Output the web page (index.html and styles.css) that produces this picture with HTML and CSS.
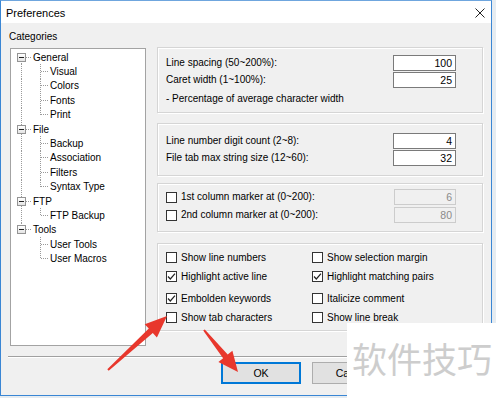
FILE: index.html
```html
<!DOCTYPE html>
<html>
<head>
<meta charset="utf-8">
<link rel="stylesheet" href="styles.css">
</head>
<body>
<div class="screen">
  <div class="window">
    <div class="titlebar">
      <span class="title">Preferences</span>
      <svg class="close" width="10" height="10" viewBox="0 0 10 10"><path d="M0.5 0.5 L9.5 9.5 M9.5 0.5 L0.5 9.5" stroke="#222" stroke-width="1" fill="none"/></svg>
    </div>
    <div class="client">
      <div class="main">
        <div class="left">
          <div class="cat-label">Categories</div>
          <div class="tree">
            <div class="row top first"><span class="box"></span><span class="hd hd5"></span><span class="tx">General</span></div>
            <div class="row child r"><span class="hd hd8"></span><span class="tx">Visual</span></div>
            <div class="row child r"><span class="hd hd8"></span><span class="tx">Colors</span></div>
            <div class="row child r"><span class="hd hd8"></span><span class="tx">Fonts</span></div>
            <div class="row child r last"><span class="hd hd8"></span><span class="tx">Print</span></div>
            <div class="row top mid"><span class="box"></span><span class="hd hd5"></span><span class="tx">File</span></div>
            <div class="row child r"><span class="hd hd8"></span><span class="tx">Backup</span></div>
            <div class="row child r"><span class="hd hd8"></span><span class="tx">Association</span></div>
            <div class="row child r"><span class="hd hd8"></span><span class="tx">Filters</span></div>
            <div class="row child r last"><span class="hd hd8"></span><span class="tx">Syntax Type</span></div>
            <div class="row top mid"><span class="box"></span><span class="hd hd5"></span><span class="tx">FTP</span></div>
            <div class="row child r last"><span class="hd hd8"></span><span class="tx">FTP Backup</span></div>
            <div class="row top last"><span class="box"></span><span class="hd hd5"></span><span class="tx">Tools</span></div>
            <div class="row child"><span class="hd hd8"></span><span class="tx">User Tools</span></div>
            <div class="row child last"><span class="hd hd8"></span><span class="tx">User Macros</span></div>
          </div>
        </div>
        <div class="right">
          <div class="group g1">
            <div class="frow"><span>Line spacing (50~200%):</span><span class="input">100</span></div>
            <div class="frow"><span>Caret width (1~100%):</span><span class="input">25</span></div>
            <div class="note">- Percentage of average character width</div>
          </div>
          <div class="group g2">
            <div class="frow"><span>Line number digit count (2~8):</span><span class="input">4</span></div>
            <div class="frow"><span>File tab max string size (12~60):</span><span class="input">32</span></div>
          </div>
          <div class="group g3">
            <div class="frow r18"><span class="chk"><span class="cb"></span>1st column marker at (0~200):</span><span class="input dis">6</span></div>
            <div class="frow r18"><span class="chk"><span class="cb"></span>2nd column marker at (0~200):</span><span class="input dis">80</span></div>
          </div>
          <div class="group g4">
            <div class="cgrid">
              <span class="chk"><span class="cb"></span>Show line numbers</span>
              <span class="chk"><span class="cb"></span>Show selection margin</span>
              <span class="chk"><span class="cb on"><svg width="11" height="11" viewBox="0 0 11 11"><path d="M2 5.5 L4.3 8 L9 2.6" stroke="#222" stroke-width="1.2" fill="none"/></svg></span>Highlight active line</span>
              <span class="chk"><span class="cb on"><svg width="11" height="11" viewBox="0 0 11 11"><path d="M2 5.5 L4.3 8 L9 2.6" stroke="#222" stroke-width="1.2" fill="none"/></svg></span>Highlight matching pairs</span>
            </div>
            <div class="cgrid second">
              <span class="chk"><span class="cb on"><svg width="11" height="11" viewBox="0 0 11 11"><path d="M2 5.5 L4.3 8 L9 2.6" stroke="#222" stroke-width="1.2" fill="none"/></svg></span>Embolden keywords</span>
              <span class="chk"><span class="cb"></span>Italicize comment</span>
              <span class="chk"><span class="cb"></span>Show tab characters</span>
              <span class="chk"><span class="cb"></span>Show line break</span>
            </div>
          </div>
        </div>
      </div>
      <div class="sep"></div>
      <div class="buttons">
        <div class="btn default">OK</div>
        <div class="btn">Cancel</div>
      </div>
    </div>
  </div>

  <svg class="arrows" width="496" height="398" viewBox="0 0 496 398">
    <polygon fill="#e8372c" points="107.3,369.3 148.8,328.6 144.7,324.2 167,316 156.9,337.5 152.8,333.1 108.7,370.7"/>
    <polygon fill="#e8372c" points="204.8,329.4 227.7,354.5 232.4,350.7 238,372 218.4,362.1 223.1,358.3 203.2,330.6"/>
  </svg>

  <div class="watermark">软件技巧</div>
</div>
</body>
</html>
```

FILE: styles.css
```css
* { box-sizing: border-box; }

body {
  margin: 0;
  width: 496px;
  height: 398px;
  overflow: hidden;
  background: #e6ecf1;
  font-family: "Liberation Sans", Arial, sans-serif;
  font-size: 10px;
  color: #000;
}

.screen {
  position: relative;
  width: 496px;
  height: 398px;
}

.window {
  width: 492px;
  height: 396px;
  border: 1px solid #3a86d4;
  border-top-color: #6fa6de;
  background: #f0f0f0;
  display: flex;
  flex-direction: column;
}

.titlebar {
  height: 22px;
  background: #fff;
  display: flex;
  align-items: center;
  padding-left: 5px;
  padding-right: 6px;
}

.title {
  font-size: 11px;
  padding-top: 1px;
}

.close {
  margin-left: auto;
  margin-top: 1px;
}

.client {
  flex: 1;
  padding: 0 6px 0 9px;
}

.main {
  display: flex;
  height: 333px;
}

.left {
  width: 136px;
  padding-top: 7px;
  display: flex;
  flex-direction: column;
}

.cat-label {
  height: 13px;
  line-height: 13px;
  padding-left: 0;
  margin-left: -1px;
}

.tree {
  margin-top: 5px;
  height: 298px;
  background: #fff;
  border: 1px solid #a3a3a3;
  padding-top: 1px;
  --vd: repeating-linear-gradient(to bottom, #9a9a9a 0 1px, transparent 1px 2px);
}

.row {
  height: 14.4px;
  display: flex;
  align-items: center;
  white-space: nowrap;
}

.row.top { padding-left: 6px; }
.row.child { padding-left: 30px; }

.row.top.first { background: var(--vd) 10px 100% / 1px 50% no-repeat; }
.row.top.mid { background: var(--vd) 10px 0 / 1px 100% no-repeat; }
.row.top.last { background: var(--vd) 10px 0 / 1px 50% no-repeat; }

.row.child { background: var(--vd) 29px 0 / 1px 100% no-repeat; }
.row.child.last { background: var(--vd) 29px 0 / 1px 50% no-repeat; }
.row.child.r { background: var(--vd) 29px 0 / 1px 100% no-repeat, var(--vd) 10px 0 / 1px 100% no-repeat; }
.row.child.r.last { background: var(--vd) 29px 0 / 1px 50% no-repeat, var(--vd) 10px 0 / 1px 100% no-repeat; }

.box {
  width: 9px;
  height: 9px;
  border: 1px solid #949494;
  background: linear-gradient(#222, #222) center / 5px 1px no-repeat, linear-gradient(#fff, #e4e4e4);
  flex: none;
}

.hd {
  height: 1px;
  flex: none;
  background: repeating-linear-gradient(to right, #9a9a9a 0 1px, transparent 1px 2px);
}
.hd5 { width: 6px; margin-right: 1px; }
.hd8 { width: 8px; margin-right: 1px; }

.tx { line-height: 13px; }

.right {
  width: 326px;
  margin-left: 11px;
  padding-top: 24px;
  display: flex;
  flex-direction: column;
}

.group {
  border: 1px solid #d5d5d5;
  box-shadow: inset 1px 1px 0 #fff, 1px 1px 0 #fff;
  padding-left: 8px;
  padding-right: 26px;
}

.g1 { height: 66px; padding-top: 7px; }
.g2 { height: 53px; margin-top: 10px; padding-top: 9px; }
.g3 { height: 49px; margin-top: 7px; padding-top: 5px; }
.g4 { height: 88px; margin-top: 11px; padding-top: 4px; }

.frow {
  display: flex;
  justify-content: space-between;
  align-items: flex-start;
  height: 17px;
}
.frow > span:first-child { line-height: 16px; }
.frow.r18 { height: 18px; }

.input {
  width: 63px;
  height: 16px;
  border: 1px solid #7a7a7a;
  background: #fff;
  text-align: right;
  padding-right: 3px;
  line-height: 14px;
  font-size: 10.5px;
}

.input.dis {
  border-color: #cccccc;
  background: #f0f0f0;
  color: #8a8a8a;
  width: 62px;
}

.note {
  margin-top: 2px;
  line-height: 16px;
}

.chk {
  display: flex;
  align-items: center;
  white-space: nowrap;
  height: 16px;
}

.cb {
  width: 11px;
  height: 11px;
  border: 1px solid #333;
  background: #fff;
  margin-right: 4px;
  flex: none;
  display: flex;
}
.cb svg { margin: -1px; }

.cgrid {
  display: grid;
  grid-template-columns: 146px auto;
  grid-auto-rows: 19px;
  align-items: center;
}
.cgrid.second { margin-top: 3px; }

.sep {
  height: 2px;
  border-top: 1px solid #a0a0a0;
  border-bottom: 1px solid #fff;
  margin-left: -2px;
}

.buttons {
  display: flex;
  gap: 11px;
  margin-top: 4px;
  padding-left: 211px;
}

.btn {
  width: 80px;
  height: 22px;
  border: 1px solid #adadad;
  background: #e1e1e1;
  display: flex;
  align-items: center;
  justify-content: center;
  font-size: 10.5px;
}
.btn.default {
  border: 1px solid #0078d7;
  box-shadow: inset 0 0 0 1px #0078d7;
}

.arrows {
  position: absolute;
  left: 0;
  top: 0;
  pointer-events: none;
}

.watermark {
  position: absolute;
  left: 347px;
  top: 323px;
  width: 149px;
  height: 75px;
  background: #fff;
  color: #cdcdcd;
  font-family: "Noto Sans CJK SC", sans-serif;
  font-size: 35px;
  line-height: 70px;
  padding-left: 5px;
  white-space: nowrap;
}
```
